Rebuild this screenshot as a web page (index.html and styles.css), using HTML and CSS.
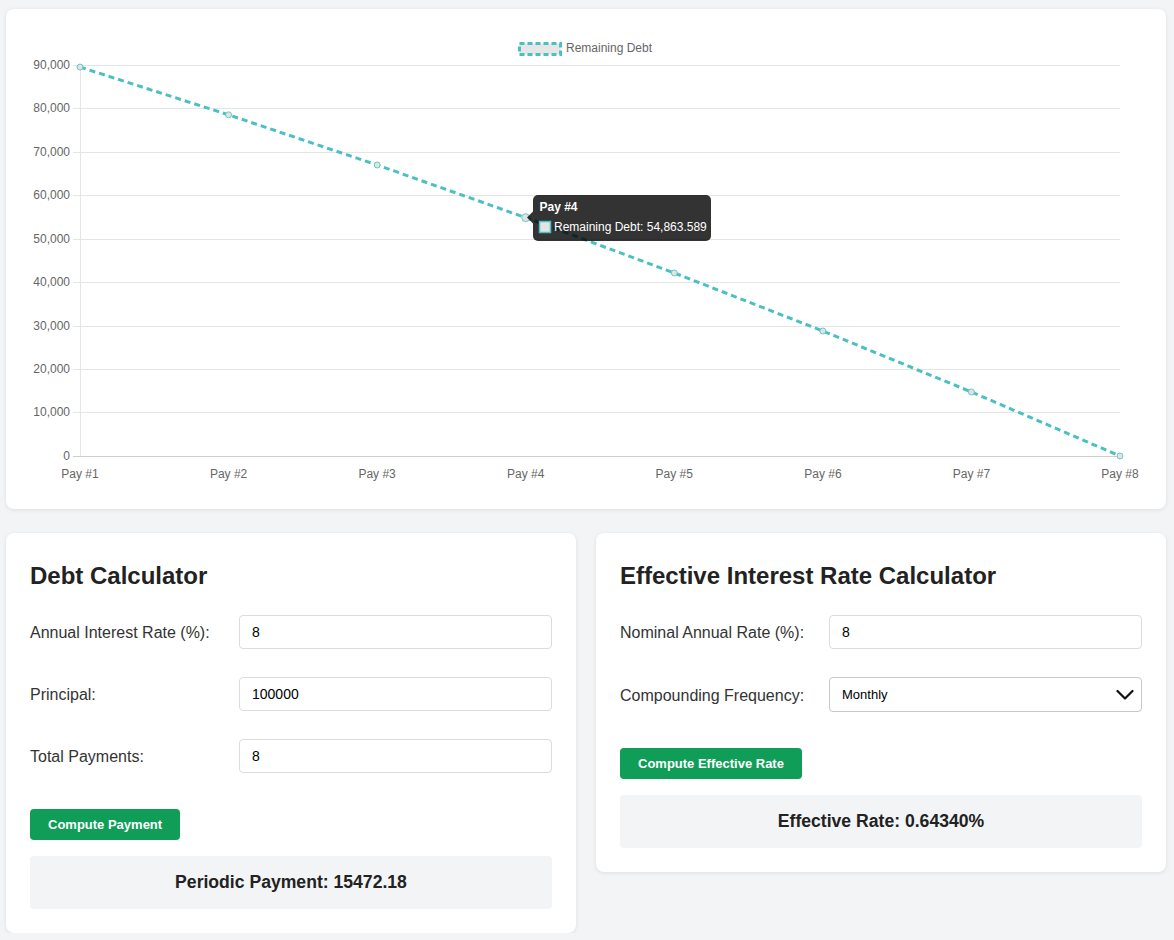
FILE: index.html
```html
<!DOCTYPE html>
<html lang="en">
<head>
<meta charset="utf-8">
<title>Debt Calculator</title>
<link rel="stylesheet" href="styles.css">
</head>
<body>
<div class="page">
  <section class="card chart-card">
    <svg class="chart" width="1160" height="500" viewBox="6 9 1160 500" xmlns="http://www.w3.org/2000/svg">
      <!-- legend -->
      <rect x="519.5" y="43.5" width="41" height="11" fill="#e6e6e6" stroke="#4bc0c0" stroke-width="3" stroke-dasharray="5 3"/>
      <text x="566" y="52" class="tick">Remaining Debt</text>

      <!-- grid -->
      <g stroke="#e5e5e5" stroke-width="1">
        <line x1="73" y1="65.5" x2="1120" y2="65.5"/>
        <line x1="73" y1="108.5" x2="1120" y2="108.5"/>
        <line x1="73" y1="152.5" x2="1120" y2="152.5"/>
        <line x1="73" y1="195.5" x2="1120" y2="195.5"/>
        <line x1="73" y1="239.5" x2="1120" y2="239.5"/>
        <line x1="73" y1="282.5" x2="1120" y2="282.5"/>
        <line x1="73" y1="326.5" x2="1120" y2="326.5"/>
        <line x1="73" y1="369.5" x2="1120" y2="369.5"/>
        <line x1="73" y1="412.5" x2="1120" y2="412.5"/>
        <line x1="80.5" y1="65" x2="80.5" y2="456"/>
      </g>
      <line x1="73" y1="456.5" x2="1120" y2="456.5" stroke="#cfcfcf" stroke-width="1"/>

      <!-- y labels -->
      <g class="tick" text-anchor="end">
        <text x="70" y="69">90,000</text>
        <text x="70" y="112">80,000</text>
        <text x="70" y="156">70,000</text>
        <text x="70" y="199">60,000</text>
        <text x="70" y="243">50,000</text>
        <text x="70" y="286">40,000</text>
        <text x="70" y="330">30,000</text>
        <text x="70" y="373">20,000</text>
        <text x="70" y="416">10,000</text>
        <text x="70" y="460">0</text>
      </g>

      <!-- x labels -->
      <g class="tick" text-anchor="middle">
        <text x="80" y="478">Pay #1</text>
        <text x="228.6" y="478">Pay #2</text>
        <text x="377.1" y="478">Pay #3</text>
        <text x="525.7" y="478">Pay #4</text>
        <text x="674.3" y="478">Pay #5</text>
        <text x="822.9" y="478">Pay #6</text>
        <text x="971.4" y="478">Pay #7</text>
        <text x="1120" y="478">Pay #8</text>
      </g>

      <!-- line -->
      <polyline fill="none" stroke="#4bc0c0" stroke-width="3" stroke-dasharray="6 4"
        points="80,67.05 228.57,114.82 377.14,164.98 525.71,217.65 674.29,272.95 822.86,331.01 971.43,391.98 1120,456"/>

      <!-- points -->
      <g fill="#e2e2e2" stroke="#4bc0c0" stroke-opacity="0.8" stroke-width="1">
        <circle cx="80" cy="67.05" r="3"/>
        <circle cx="228.57" cy="114.82" r="3"/>
        <circle cx="377.14" cy="164.98" r="3"/>
        <circle cx="525.71" cy="217.65" r="4"/>
        <circle cx="674.29" cy="272.95" r="3"/>
        <circle cx="822.86" cy="331.01" r="3"/>
        <circle cx="971.43" cy="391.98" r="3"/>
        <circle cx="1120" cy="456" r="3"/>
      </g>

      <!-- tooltip -->
      <g>
        <rect x="533" y="195" width="178" height="46" rx="5" fill="rgba(0,0,0,0.8)"/>
        <polygon points="533,211.6 527,217.6 533,223.6" fill="rgba(0,0,0,0.8)"/>
        <text x="539.5" y="211" class="tt-title">Pay #4</text>
        <rect x="539.5" y="221.5" width="11" height="11" fill="#ffffff"/>
        <rect x="539.5" y="221.5" width="11" height="11" fill="#e4e4e4" stroke="#4bc0c0" stroke-width="1.5"/>
        <text x="554" y="231" class="tt-body">Remaining Debt: 54,863.589</text>
      </g>
    </svg>
  </section>

  <div class="calc-row">
    <section class="card calc">
      <h2 class="calc-title">Debt Calculator</h2>
      <div class="field">
        <label class="field-label">Annual Interest Rate (%):</label>
        <input class="field-input" type="text" value="8">
      </div>
      <div class="field">
        <label class="field-label">Principal:</label>
        <input class="field-input" type="text" value="100000">
      </div>
      <div class="field">
        <label class="field-label">Total Payments:</label>
        <input class="field-input" type="text" value="8">
      </div>
      <button class="btn" type="button">Compute Payment</button>
      <div class="result">Periodic Payment: 15472.18</div>
    </section>

    <section class="card calc">
      <h2 class="calc-title">Effective Interest Rate Calculator</h2>
      <div class="field">
        <label class="field-label">Nominal Annual Rate (%):</label>
        <input class="field-input" type="text" value="8">
      </div>
      <div class="field">
        <label class="field-label">Compounding Frequency:</label>
        <div class="select-wrap">
          <select class="field-select">
            <option>Monthly</option>
          </select>
          <svg class="chevron" width="18" height="12" viewBox="0 0 18 12" xmlns="http://www.w3.org/2000/svg">
            <polyline points="1.5,2 9,9.5 16.5,2" fill="none" stroke="#111" stroke-width="2.2" stroke-linecap="round" stroke-linejoin="round"/>
          </svg>
        </div>
      </div>
      <button class="btn" type="button">Compute Effective Rate</button>
      <div class="result">Effective Rate: 0.64340%</div>
    </section>
  </div>
</div>
</body>
</html>
```

FILE: styles.css
```css
* { box-sizing: border-box; }

html, body {
  margin: 0;
  padding: 0;
  background: #f3f4f6;
}

body {
  font-family: "Liberation Sans", Arial, Helvetica, sans-serif;
  color: #333;
}

.page {
  padding: 9px 8px 0 6px;
  display: flex;
  flex-direction: column;
  gap: 24px;
}

.card {
  background: #ffffff;
  border-radius: 8px;
  box-shadow: 0 1px 4px rgba(0, 0, 0, 0.09);
}

.chart-card {
  height: 500px;
  overflow: hidden;
}

.chart {
  display: block;
}

.tick {
  font-family: "Liberation Sans", Arial, sans-serif;
  font-size: 12px;
  fill: #666666;
}

.tt-title {
  font-family: "Liberation Sans", Arial, sans-serif;
  font-size: 12px;
  font-weight: bold;
  fill: #ffffff;
}

.tt-body {
  font-family: "Liberation Sans", Arial, sans-serif;
  font-size: 12px;
  fill: #ffffff;
}

.calc-row {
  display: grid;
  grid-template-columns: 1fr 1fr;
  gap: 20px;
  align-items: start;
}

.calc {
  padding: 24px;
  display: flex;
  flex-direction: column;
}

.calc-title {
  margin: 0 0 20px 0;
  font-size: 24px;
  line-height: 38px;
  font-weight: bold;
  color: #222;
}

.field {
  display: flex;
  align-items: center;
  margin-bottom: 28px;
}

.field-label {
  width: 209px;
  flex: 0 0 209px;
  font-size: 16px;
  padding-top: 2px;
  color: #333;
}

.field-input {
  flex: 1;
  height: 34px;
  border: 1px solid #dcdcdc;
  border-radius: 4px;
  padding: 0 12px;
  font-family: "Liberation Sans", Arial, sans-serif;
  font-size: 14px;
  color: #000;
  background: #fff;
  outline: none;
}

.select-wrap {
  flex: 1;
  position: relative;
}

.field-select {
  -webkit-appearance: none;
  appearance: none;
  width: 100%;
  height: 35px;
  border: 1px solid #c8c8c8;
  border-radius: 4px;
  padding: 0 12px;
  font-family: "Liberation Sans", Arial, sans-serif;
  font-size: 13px;
  color: #000;
  background: #fff;
  outline: none;
}

.chevron {
  position: absolute;
  right: 8px;
  top: 12px;
  pointer-events: none;
}

.btn {
  align-self: flex-start;
  margin-top: 8px;
  height: 31px;
  padding: 0 18px;
  border: none;
  border-radius: 4px;
  background: #0f9d58;
  color: #ffffff;
  font-family: "Liberation Sans", Arial, sans-serif;
  font-size: 13px;
  font-weight: bold;
}

.result {
  margin-top: 16px;
  background: #f3f4f6;
  border-radius: 4px;
  padding: 16px;
  line-height: 21px;
  text-align: center;
  font-size: 17.6px;
  font-weight: bold;
  color: #222;
}
```
